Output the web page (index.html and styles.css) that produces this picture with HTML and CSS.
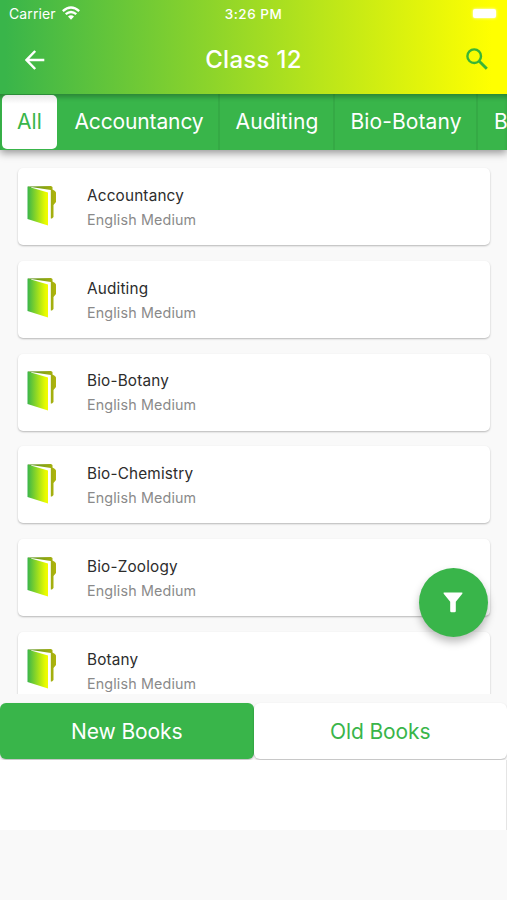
FILE: index.html
```html
<!DOCTYPE html>
<html lang="en">
<head>
<meta charset="utf-8">
<title>Class 12</title>
<link rel="stylesheet" href="styles.css">
</head>
<body>
<svg class="defs" width="0" height="0" aria-hidden="true">
  <defs>
    <linearGradient id="cover"><stop offset="0" stop-color="#39b54a"/><stop offset=".85" stop-color="#e4fa00"/><stop offset="1" stop-color="#f4fc00"/></linearGradient>
    <linearGradient id="back"><stop offset="0" stop-color="#559020"/><stop offset="1" stop-color="#b0b40c"/></linearGradient>
    <symbol id="folder" viewBox="0 0 30 42">
      <path d="M1 1.5 24 1 25.5 2V4.5L28 6 29 7.5V17L26.5 20V32L25 33.5H20L1 20Z" fill="url(#back)"/>
      <path d="M4 2 23.8 5V34L20 35Z" fill="#fff"/>
      <path d="M.5 1.5 21 7.5V40.5L.5 34Z" fill="url(#cover)"/>
    </symbol>
  </defs>
</svg>
<div class="screen">
  <header class="header">
    <div class="status">
      <div class="carrier"><span>Carrier</span>
        <svg width="18" height="14" viewBox="0 0 18 14" fill="none" stroke="#fff" stroke-width="2.3"><path d="M.8 5.1Q9-2.2 17.2 5.1M3.7 8.2Q9 3.7 14.3 8.2"/><path d="M6 10.5Q9 8 12 10.5L9 13.7Z" fill="#fff" stroke="none"/></svg>
      </div>
      <span class="time">3:26 PM</span>
      <span class="battery"></span>
    </div>
    <div class="toolbar">
      <svg class="arrow" width="20" height="20" viewBox="0 0 20 20" fill="none" stroke="#fff" stroke-width="2.5"><path d="M19.3 10H2M10.2 1 1.5 10l8.7 9"/></svg>
      <h1>Class 12</h1>
      <svg class="search" width="22" height="22" viewBox="0 0 22 22" fill="none" stroke="#39b536" stroke-width="2.4"><circle cx="8.2" cy="8.2" r="6.8"/><path d="m13 13 7.8 7.8" stroke-width="2.9"/></svg>
    </div>
  </header>
  <nav class="tabs">
    <div class="tab active"><span>All</span></div>
    <div class="tab accountancy"><span>Accountancy</span></div>
    <div class="tab auditing"><span>Auditing</span></div>
    <div class="tab botany"><span>Bio-Botany</span></div>
    <div class="tab next"><span>B</span></div>
  </nav>
  <main class="list">
    <article class="card"><svg><use href="#folder"/></svg><div><h2>Accountancy</h2><p>English Medium</p></div></article>
    <article class="card"><svg><use href="#folder"/></svg><div><h2>Auditing</h2><p>English Medium</p></div></article>
    <article class="card"><svg><use href="#folder"/></svg><div><h2>Bio-Botany</h2><p>English Medium</p></div></article>
    <article class="card"><svg><use href="#folder"/></svg><div><h2>Bio-Chemistry</h2><p>English Medium</p></div></article>
    <article class="card"><svg><use href="#folder"/></svg><div><h2>Bio-Zoology</h2><p>English Medium</p></div></article>
    <article class="card"><svg><use href="#folder"/></svg><div><h2>Botany</h2><p>English Medium</p></div></article>
  </main>
  <div class="switch">
    <div class="choice selected"><span>New Books</span></div>
    <div class="choice"><span>Old Books</span></div>
  </div>
  <div class="banner"></div>
  <div class="fab"><svg width="20" height="21" viewBox="0 0 20 21"><path d="M1.2.5H18.8Q20 .5 19.3 1.7L12.8 9.8V19Q12.8 20.3 11.5 20.3H8.5Q7.2 20.3 7.2 19V9.8L.7 1.7Q0 .5 1.2.5Z" fill="#fff"/></svg></div>
</div>
</body>
</html>
```
FILE: styles.css
```css
* { box-sizing: border-box; }
body { margin: 0; background: #f9f9f9; font-family: Inter, sans-serif; }
h1, h2, p { margin: 0; font-weight: 400; }
.defs { position: absolute; }
.screen { position: relative; width: 507px; height: 900px; overflow: hidden; display: flex; flex-direction: column; }
.header { height: 94px; flex: none; background: linear-gradient(90deg, #39b54a 1%, #ff0 97%); color: #fff; }
.status { height: 28px; display: grid; grid-template-columns: 1fr auto 1fr; align-items: center; padding: 0 11px 0 9px; font-size: 14px; }
.carrier { display: flex; align-items: center; gap: 6px; letter-spacing: .1px; }
.carrier span { position: relative; top: -1px; }
.carrier svg { margin-top: -2px; }
.time { font-size: 13.5px; font-weight: 500; letter-spacing: .5px; margin-left: 2px; }
.battery { justify-self: end; width: 23px; height: 9px; margin-top: -1px; border-radius: 2px; background: #fff; box-shadow: 0 0 3px #fff; }
.toolbar { height: 63px; display: grid; grid-template-columns: 1fr auto 1fr; align-items: center; padding: 0 19px 0 25px; }
.toolbar h1 { font-size: 24px; font-weight: 500; letter-spacing: .3px; margin-right: 6px; }
.search { justify-self: end; margin-top: -2px; }
.tabs { position: relative; height: 56px; flex: none; display: flex; background: #39b54a; box-shadow: inset 0 5px 5px -2px #00000045, 0 3px 8px #0006; color: #fff; font-size: 21px; letter-spacing: .1px; z-index: 2; clip-path: inset(0 0 -14px 0); }
.tab { flex: none; display: flex; justify-content: center; align-items: center; white-space: nowrap; padding-bottom: 2px; border-right: 2px solid #0000000f; }
.tab.active { width: 55px; height: 54px; margin: 1px 1px 1px 2px; color: #39b54a; background: linear-gradient(#e8e8e8, #fff 9px); border: 0; border-radius: 5px; }
.accountancy { width: 162px; padding-left: 2px; letter-spacing: -.13px; }
.auditing { width: 115px; padding-left: 1px; }
.botany { width: 143px; padding-left: 1px; }
.next { justify-content: flex-start; padding-left: 16px; border: 0; letter-spacing: 0; }
.list { height: 544px; flex: none; overflow: hidden; padding: 18px 17px 0 18px; display: flex; flex-direction: column; gap: 15.8px; }
.card { height: 77px; flex: none; display: flex; align-items: center; background: #fff; border-radius: 5px; box-shadow: 0 1px 2px #0004; }
.card svg { width: 30px; height: 42px; margin: 0 30px 2px 9px; }
.card div { padding-top: 2px; }
.card h2 { color: #2c2c2c; font-size: 15.3px; line-height: 25px; letter-spacing: .18px; }
.card p { color: #8a8a8a; font-size: 14.3px; line-height: 24.5px; letter-spacing: .15px; }
.switch { display: flex; height: 56px; flex: none; margin-top: 9px; }
.choice { flex: 1; display: flex; align-items: center; justify-content: center; border-radius: 6px; background: #fff; box-shadow: 0 1px 2px #0004; color: #39b54a; font-size: 21px; letter-spacing: -.1px; }
.choice.selected { background: #39b54a; color: #fff; }
.banner { height: 70px; margin-top: 1px; background: #fff; border-right: 1px solid #e5e5e5; }
.fab { position: absolute; left: 418.5px; top: 567.5px; width: 69px; height: 69px; border-radius: 50%; background: #39b54a; display: flex; align-items: center; justify-content: center; box-shadow: 0 5px 9px #0004; }
```
